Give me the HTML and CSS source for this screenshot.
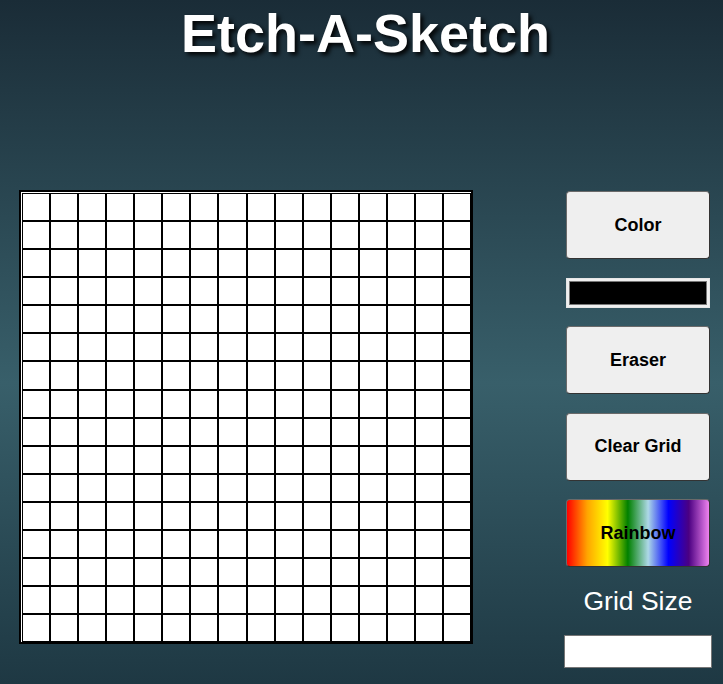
FILE: index.html
```html
<!DOCTYPE html>
<html lang="en">
<head>
<meta charset="utf-8">
<title>Etch-A-Sketch</title>
<link rel="stylesheet" href="styles.css">
</head>
<body>
<h1 class="title">Etch-A-Sketch</h1>
<main class="main">
  <div class="grid">
    <div class="cell"></div><div class="cell"></div><div class="cell"></div><div class="cell"></div><div class="cell"></div><div class="cell"></div><div class="cell"></div><div class="cell"></div><div class="cell"></div><div class="cell"></div><div class="cell"></div><div class="cell"></div><div class="cell"></div><div class="cell"></div><div class="cell"></div><div class="cell"></div>
    <div class="cell"></div><div class="cell"></div><div class="cell"></div><div class="cell"></div><div class="cell"></div><div class="cell"></div><div class="cell"></div><div class="cell"></div><div class="cell"></div><div class="cell"></div><div class="cell"></div><div class="cell"></div><div class="cell"></div><div class="cell"></div><div class="cell"></div><div class="cell"></div>
    <div class="cell"></div><div class="cell"></div><div class="cell"></div><div class="cell"></div><div class="cell"></div><div class="cell"></div><div class="cell"></div><div class="cell"></div><div class="cell"></div><div class="cell"></div><div class="cell"></div><div class="cell"></div><div class="cell"></div><div class="cell"></div><div class="cell"></div><div class="cell"></div>
    <div class="cell"></div><div class="cell"></div><div class="cell"></div><div class="cell"></div><div class="cell"></div><div class="cell"></div><div class="cell"></div><div class="cell"></div><div class="cell"></div><div class="cell"></div><div class="cell"></div><div class="cell"></div><div class="cell"></div><div class="cell"></div><div class="cell"></div><div class="cell"></div>
    <div class="cell"></div><div class="cell"></div><div class="cell"></div><div class="cell"></div><div class="cell"></div><div class="cell"></div><div class="cell"></div><div class="cell"></div><div class="cell"></div><div class="cell"></div><div class="cell"></div><div class="cell"></div><div class="cell"></div><div class="cell"></div><div class="cell"></div><div class="cell"></div>
    <div class="cell"></div><div class="cell"></div><div class="cell"></div><div class="cell"></div><div class="cell"></div><div class="cell"></div><div class="cell"></div><div class="cell"></div><div class="cell"></div><div class="cell"></div><div class="cell"></div><div class="cell"></div><div class="cell"></div><div class="cell"></div><div class="cell"></div><div class="cell"></div>
    <div class="cell"></div><div class="cell"></div><div class="cell"></div><div class="cell"></div><div class="cell"></div><div class="cell"></div><div class="cell"></div><div class="cell"></div><div class="cell"></div><div class="cell"></div><div class="cell"></div><div class="cell"></div><div class="cell"></div><div class="cell"></div><div class="cell"></div><div class="cell"></div>
    <div class="cell"></div><div class="cell"></div><div class="cell"></div><div class="cell"></div><div class="cell"></div><div class="cell"></div><div class="cell"></div><div class="cell"></div><div class="cell"></div><div class="cell"></div><div class="cell"></div><div class="cell"></div><div class="cell"></div><div class="cell"></div><div class="cell"></div><div class="cell"></div>
    <div class="cell"></div><div class="cell"></div><div class="cell"></div><div class="cell"></div><div class="cell"></div><div class="cell"></div><div class="cell"></div><div class="cell"></div><div class="cell"></div><div class="cell"></div><div class="cell"></div><div class="cell"></div><div class="cell"></div><div class="cell"></div><div class="cell"></div><div class="cell"></div>
    <div class="cell"></div><div class="cell"></div><div class="cell"></div><div class="cell"></div><div class="cell"></div><div class="cell"></div><div class="cell"></div><div class="cell"></div><div class="cell"></div><div class="cell"></div><div class="cell"></div><div class="cell"></div><div class="cell"></div><div class="cell"></div><div class="cell"></div><div class="cell"></div>
    <div class="cell"></div><div class="cell"></div><div class="cell"></div><div class="cell"></div><div class="cell"></div><div class="cell"></div><div class="cell"></div><div class="cell"></div><div class="cell"></div><div class="cell"></div><div class="cell"></div><div class="cell"></div><div class="cell"></div><div class="cell"></div><div class="cell"></div><div class="cell"></div>
    <div class="cell"></div><div class="cell"></div><div class="cell"></div><div class="cell"></div><div class="cell"></div><div class="cell"></div><div class="cell"></div><div class="cell"></div><div class="cell"></div><div class="cell"></div><div class="cell"></div><div class="cell"></div><div class="cell"></div><div class="cell"></div><div class="cell"></div><div class="cell"></div>
    <div class="cell"></div><div class="cell"></div><div class="cell"></div><div class="cell"></div><div class="cell"></div><div class="cell"></div><div class="cell"></div><div class="cell"></div><div class="cell"></div><div class="cell"></div><div class="cell"></div><div class="cell"></div><div class="cell"></div><div class="cell"></div><div class="cell"></div><div class="cell"></div>
    <div class="cell"></div><div class="cell"></div><div class="cell"></div><div class="cell"></div><div class="cell"></div><div class="cell"></div><div class="cell"></div><div class="cell"></div><div class="cell"></div><div class="cell"></div><div class="cell"></div><div class="cell"></div><div class="cell"></div><div class="cell"></div><div class="cell"></div><div class="cell"></div>
    <div class="cell"></div><div class="cell"></div><div class="cell"></div><div class="cell"></div><div class="cell"></div><div class="cell"></div><div class="cell"></div><div class="cell"></div><div class="cell"></div><div class="cell"></div><div class="cell"></div><div class="cell"></div><div class="cell"></div><div class="cell"></div><div class="cell"></div><div class="cell"></div>
    <div class="cell"></div><div class="cell"></div><div class="cell"></div><div class="cell"></div><div class="cell"></div><div class="cell"></div><div class="cell"></div><div class="cell"></div><div class="cell"></div><div class="cell"></div><div class="cell"></div><div class="cell"></div><div class="cell"></div><div class="cell"></div><div class="cell"></div><div class="cell"></div>
  </div>
  <div class="panel">
    <button class="btn" type="button">Color</button>
    <input class="color-input" type="color" value="#000000">
    <button class="btn" type="button">Eraser</button>
    <button class="btn" type="button">Clear Grid</button>
    <button class="btn btn-rainbow" type="button">Rainbow</button>
    <label class="size-label" for="size">Grid Size</label>
    <input class="size-input" id="size" type="text">
  </div>
</main>
</body>
</html>
```

FILE: styles.css
```css
html, body {
  margin: 0;
  padding: 0;
  height: 100%;
}

body {
  font-family: "Liberation Sans", Arial, sans-serif;
  background: linear-gradient(to bottom, #1a2c37 0%, #385f6a 56%, #1e3843 100%);
  overflow: hidden;
}

.title {
  margin: 0;
  padding: 2px 0 0 8px;
  text-align: center;
  font-size: 54px;
  line-height: 1.15;
  font-weight: bold;
  color: #ffffff;
  text-shadow: 3px 3px 4px rgba(0, 0, 0, 0.9);
}

.main {
  display: flex;
  justify-content: space-between;
  align-items: flex-start;
  padding: 0 11px 0 19px;
  margin-top: 126px;
}

.grid {
  width: 449px;
  height: 449px;
  padding: 1px 0 0 1px;
  border: 2px solid #000;
  background: #fff;
  display: grid;
  grid-template-columns: repeat(16, 1fr);
  grid-template-rows: repeat(16, 1fr);
}

.cell {
  border: 1px solid #000;
  background: #fff;
}

.panel {
  width: 148px;
  margin-top: 1px;
  display: flex;
  flex-direction: column;
  align-items: center;
  gap: 18.6px;
}

.btn {
  width: 144px;
  height: 68px;
  box-sizing: border-box;
  border: 1px solid;
  border-color: #6a6a6a #333 #333 #6a6a6a;
  border-radius: 4px;
  background: #efefef;
  color: #000;
  font-family: "Liberation Sans", Arial, sans-serif;
  font-size: 18px;
  font-weight: bold;
  padding: 0;
}

.btn-rainbow {
  background: linear-gradient(to right, red, orange, yellow, green, lightblue, blue, indigo, violet);
}

.color-input {
  width: 144px;
  height: 30px;
  box-sizing: border-box;
  margin: 0;
  padding: 2px 2px;
  border: 1px solid #e6e6e6;
  background: #efefef;
  -webkit-appearance: none;
  appearance: none;
}

.color-input::-webkit-color-swatch-wrapper {
  padding: 0;
}

.color-input::-webkit-color-swatch {
  border: 1px solid #777;
  border-radius: 0;
}

.size-label {
  color: #fff;
  font-size: 26.5px;
  line-height: 1.15;
}

.size-input {
  width: 148px;
  height: 33px;
  box-sizing: border-box;
  margin: 0;
  border: 1px solid #767676;
  background: #fff;
}
```
